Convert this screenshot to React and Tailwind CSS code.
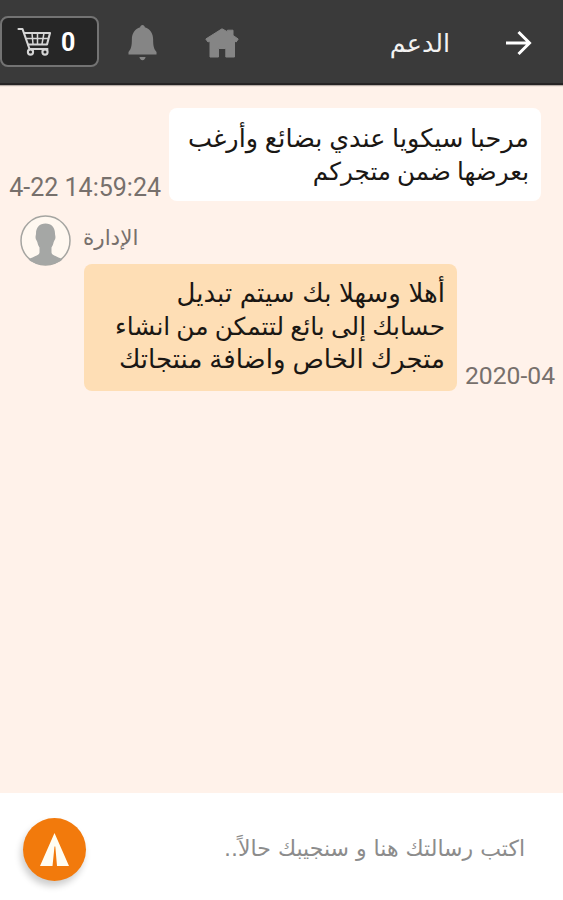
const customerMessage = [
    { text: "مرحبا سيكويا عندي بضائع وأرغب", style: "text-[25.5px] [word-spacing:0.4px]" },
    { text: "بعرضها ضمن متجركم", style: "text-[24.6px]" },
];

const adminMessage = [
    { text: "أهلا وسهلا بك سيتم تبديل", style: "text-[26px] [word-spacing:1.2px]" },
    { text: "حسابك إلى بائع لتتمكن من انشاء", style: "text-[24.8px]" },
    { text: "متجرك الخاص واضافة منتجاتك", style: "text-[26px] [word-spacing:0.5px]" },
];

function CartIcon() {
    return (
        <svg width="35" height="30" viewBox="0 0 35 30" fill="none" stroke="#d6d6d6" strokeWidth="2.1" strokeLinecap="round" strokeLinejoin="round">
            <path d="M1.500 2h4l7 20h18" />
            <path d="M7 6h26l-3 11.500H11" />
            <path d="M9 11.500h22M15 6l1 11M20.500 6v11M27 6l-2 11" strokeWidth="1.5" />
            <circle cx="13.500" cy="25" r="2.600" />
            <circle cx="28" cy="25" r="2.600" />
        </svg>
    );
}

function BellIcon() {
    return (
        <svg width="29" height="36" viewBox="0 0 30 36" preserveAspectRatio="none" fill="#858585">
            <path d="M15 0c1.300 0 2.200 1 2.400 2.200C23 4 26 8.500 26 14.500c0 6.500.8 9.500 3.500 12.500v2.500H.5V27C3.200 24 4 21 4 14.500 4 8.500 7 4 12.600 2.200 12.800 1 13.700 0 15 0z" />
            <path d="M11.800 32h6.400c-.3 2-1.600 3.200-3.200 3.200s-2.900-1.200-3.200-3.200z" />
        </svg>
    );
}

function HomeIcon() {
    return (
        <svg width="34" height="30" viewBox="0 0 34 30" fill="#858585" stroke="#858585" strokeLinejoin="round">
            <path d="M17 .8l5.500 3V2.200H28v5.200l5.200 3.600-2 3-1.700-1V29h-8.700v-8.500h-7.300V29H5V13l-2 1-2.200-3z" />
        </svg>
    );
}

function ArrowIcon() {
    return (
        <svg width="26" height="26" viewBox="0 0 26 26" className="ml-[56px] mr-[31px]" fill="none" stroke="#ffffff" strokeWidth="3">
            <path d="M0 13h24M12.500 2L23.500 13 12.500 24" />
        </svg>
    );
}

function Avatar() {
    return (
        <svg width="51" height="51" viewBox="0 0 51 51" className="shrink-0">
            <circle cx="25.5" cy="25.5" r="24.5" fill="#fff8f0" stroke="#a5a5a1" strokeWidth="1.5" />
            <path d="M25.500 8.500c6 0 9.500 4 9.500 10 0 2 .6 2 .4 4.500-.2 2-1.200 2.300-1.700 4-.6 2.500-1.200 4-2.200 5.500v5c0 3 7.500 4.500 11 7C38 48.500 31 50 25.500 50S13 48.500 8.500 44.500c3.500-2.500 11-4 11-7v-5c-1-1.500-1.600-3-2.200-5.500-.5-1.700-1.500-2-1.700-4-.2-2.500.4-2.500.4-4.500 0-6 3.500-10 9.500-10z" fill="#a5a7a5" />
        </svg>
    );
}

function SendIcon() {
    return (
        <svg width="29" height="33" viewBox="0 0 29 33">
            <path d="M14.500 0L29 33H17L15.300 13.500h-.8L12.500 33H0z" fill="#fffdf2" />
        </svg>
    );
}

function MessageLines({ lines }) {
    return lines.map((line) => (
        <p key={line.text} className={`h-[33px] whitespace-nowrap leading-[33px] text-[#1a1714] ${line.style}`}>
            {line.text}
        </p>
    ));
}

export default function App() {
    return (
        <div className="flex h-[900px] w-full flex-col overflow-hidden bg-[#fff2ea] font-['DejaVu_Sans',sans-serif]">
            {/* Top bar */}
            <header className="flex h-[85px] shrink-0 items-center border-b-2 border-[#262424] bg-[#3a3a3a] pt-[2px] shadow-[0_1px_1px_#b8aea8]">
                <div className="mb-[2px] flex h-[51px] w-[99px] items-center rounded-lg border-2 border-[#737373] bg-[#262626] pl-[15px]">
                    <CartIcon />
                    <span className="ml-[9px] mt-[3px] font-['Roboto',sans-serif] text-[25px] font-bold text-white">0</span>
                </div>
                <div className="ml-[29px]"><BellIcon /></div>
                <div className="ml-[48px]"><HomeIcon /></div>
                <h1 dir="rtl" className="ml-auto text-[25.4px] leading-[34px] text-[#f2f2f2]">الدعم</h1>
                <ArrowIcon />
            </header>

            {/* Conversation */}
            <main className="flex-1 font-['Roboto','DejaVu_Sans',sans-serif]">
                <div className="flex items-end pl-[9px] pt-[23px]">
                    <div className="w-[152px] whitespace-nowrap text-right text-[25px] leading-[27px] text-[#77706c]">4-22 14:59:24</div>
                    <div dir="rtl" className="ml-2 h-[93px] w-[372px] rounded-lg bg-white px-[12px] pt-[14px]">
                        <MessageLines lines={customerMessage} />
                    </div>
                </div>
                <div className="flex h-[63px] items-start gap-[12px] pl-[20px] pt-[14px]">
                    <Avatar />
                    <span dir="rtl" className="mt-[5px] text-[21.5px] leading-[36px] text-[#77706c]">الإدارة</span>
                </div>
                <div className="flex items-end pl-[84px]">
                    <div dir="rtl" className="h-[127px] w-[373px] rounded-lg bg-[#fedeb5] px-[12px] pt-[13px]">
                        <MessageLines lines={adminMessage} />
                    </div>
                    <div className="ml-[8px] whitespace-nowrap text-[24.7px] leading-[31px] text-[#77706c]">2020-04</div>
                </div>
            </main>

            {/* Message box */}
            <footer className="flex h-[107px] shrink-0 items-center bg-white pl-[23px] pr-[38px] pt-[6px]">
                <button className="flex size-[63px] items-center justify-center rounded-full bg-[#f27a0c] shadow-[-2px_5px_7px_rgba(0,0,0,0.2)]">
                    <SendIcon />
                </button>
                <span dir="rtl" className="ml-auto mb-[2px] text-[22px] leading-[30px] text-[#8c8c8c]">اكتب رسالتك هنا و سنجيبك حالاً..</span>
            </footer>
        </div>
    );
}
